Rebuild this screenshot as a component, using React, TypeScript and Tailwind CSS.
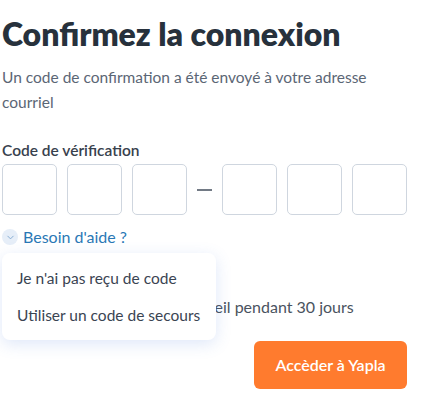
import { ChevronDown } from "lucide-react";

const font = { fontFamily: "Lato, 'Open Sans', sans-serif" };

function CodeBox() {
  return (
    <div className="h-[51px] w-[55px] rounded-[5px] border border-[#cfd6df] bg-white" />
  );
}

export default function App() {
  return (
    <div className="h-[416px] w-[423px] bg-white pl-[2px] pt-[14px]" style={font}>
      <div className="w-[405px]">
        <h1 className="text-[32px] leading-[40px] font-extrabold text-[#27313c]">
          Confirmez la connexion
        </h1>
        <p className="mt-[11px] text-[15.5px] leading-[25px] text-[#5b6675]">
          Un code de confirmation a été envoyé à votre adresse courriel
        </p>

        <label className="mt-[25px] block text-[15.5px] leading-[20px] font-semibold text-[#38414d]">
          Code de vérification
        </label>
        <div className="mt-[4px] flex items-center">
          <div className="flex gap-[10px]">
            <CodeBox />
            <CodeBox />
            <CodeBox />
          </div>
          <div className="mx-[10px] h-[2px] w-[15px] bg-[#727a85]" />
          <div className="flex gap-[10px]">
            <CodeBox />
            <CodeBox />
            <CodeBox />
          </div>
        </div>

        <div className="relative">
          <button className="mt-[12px] flex items-center gap-[5px] text-[16px] leading-[20px] text-[#2a78b5]">
            <span className="flex h-[16px] w-[16px] items-center justify-center rounded-full bg-[#e6eef8]">
              <ChevronDown className="h-[11px] w-[11px] text-[#7fa6cf]" strokeWidth={2} />
            </span>
            Besoin d'aide ?
          </button>

          {/* hidden under the open help menu in the reference */}
          <div className="mt-[50px] flex items-center gap-[15px] text-[16px] leading-[20px] text-[#4a5360]">
            <span className="ml-[6px] h-[20px] w-[20px] rounded-[4px] border border-[#cfd6df]" />
            Se souvenir de cet appareil pendant 30 jours
          </div>

          <div className="absolute left-0 top-[26px] flex w-[214px] flex-col gap-[15px] rounded-[8px] bg-white px-[15px] py-[14px] shadow-[0_4px_16px_rgba(70,120,220,0.18)]">
            <div className="text-[15.5px] leading-[22px] text-[#3a4452]">
              Je n'ai pas reçu de code
            </div>
            <div className="text-[15.5px] leading-[22px] text-[#3a4452]">
              Utiliser un code de secours
            </div>
          </div>
        </div>

        <div className="mt-[24px] flex justify-end">
          <button className="h-[48px] w-[153px] rounded-[6px] bg-[#ff7b2e] text-[16px] font-semibold text-white">
            Accèder à Yapla
          </button>
        </div>
      </div>
    </div>
  );
}
